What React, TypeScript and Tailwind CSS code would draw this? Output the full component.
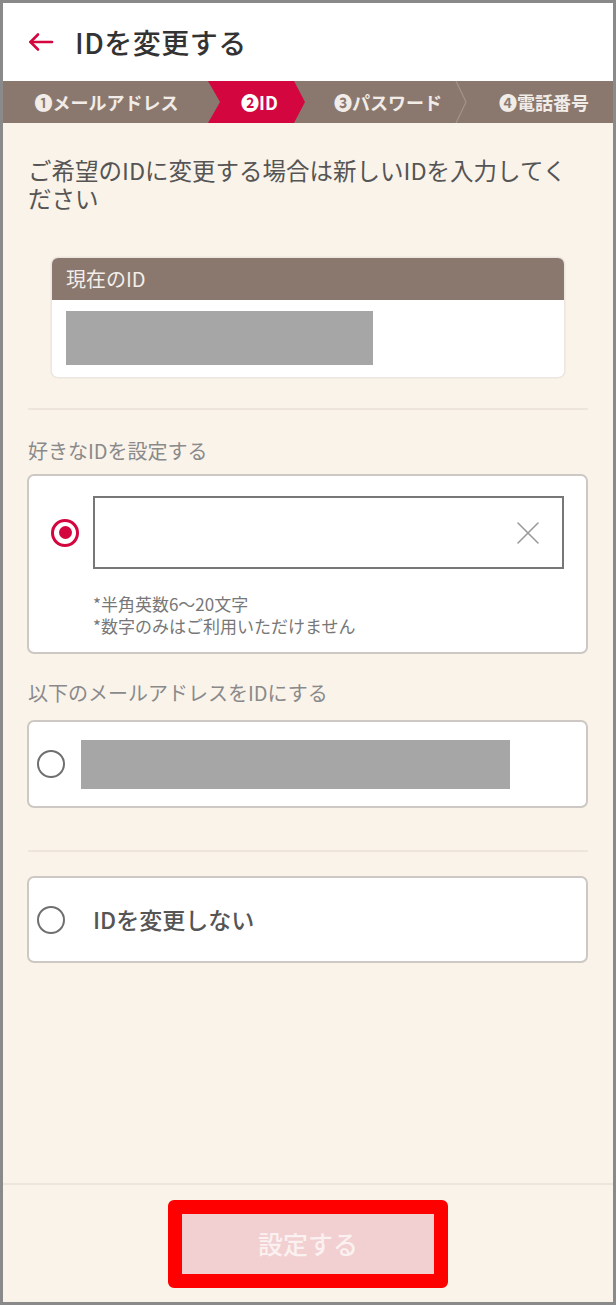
const font = { fontFamily: '"Noto Sans CJK JP", "Noto Sans", sans-serif' };

const steps = [
  { label: "❶メールアドレス", w: "w-[205px]" },
  { label: "❷ID", w: "w-[97px]", active: true },
  { label: "❸パスワード", w: "w-[160px]" },
  { label: "❹電話番号", w: "flex-1" },
];

function Radio({ checked }: { checked?: boolean }) {
  if (checked) {
    return (
      <span className="flex h-[28px] w-[28px] shrink-0 items-center justify-center rounded-full border-[3px] border-[#d3063f] bg-white">
        <span className="h-[13px] w-[13px] rounded-full bg-[#d3063f]" />
      </span>
    );
  }
  return <span className="h-[28px] w-[28px] shrink-0 rounded-full border-[2.5px] border-[#6f6f6f] bg-white" />;
}

export default function App() {
  return (
    <div style={font} className="flex h-[1305px] w-[616px] flex-col border-[3px] border-[#8a8a8a] bg-[#faf3ea]">
      <header className="flex h-[78px] shrink-0 items-center bg-white pl-[25px]">
        <svg width="26" height="20" viewBox="0 0 26 20" fill="none" stroke="#d3063f" strokeWidth="2.6" strokeLinecap="round" strokeLinejoin="round">
          <path d="M2.5 10H24" />
          <path d="M10 2.5 2.5 10 10 17.5" />
        </svg>
        <h1 className="ml-[21px] text-[28px] font-medium tracking-[0.5px] text-[#333]">IDを変更する</h1>
      </header>

      <nav className="flex h-[42px] shrink-0 items-stretch bg-[#8a786e] text-[18px] font-bold text-[#f1ece8]">
        {steps.map((s, i) =>
          s.active ? (
            <div
              key={s.label}
              className={`${s.w} flex items-center justify-center bg-[#d3063f] pl-[6px] text-white [clip-path:polygon(0_0,86px_0,97px_50%,86px_100%,0_100%,12px_50%)]`}
            >
              {s.label}
            </div>
          ) : (
            <div key={s.label} className={`${s.w} relative flex items-center justify-center`}>
              <span className={i === 0 ? "pl-[2px]" : i === 3 ? "pl-[10px]" : "pl-[6px]"}>{s.label}</span>
              {i === 2 && (
                <svg className="absolute right-[-2px] top-0" width="12" height="42" viewBox="0 0 12 42" fill="none" stroke="#a39389" strokeWidth="1.2">
                  <path d="M1 0 11 21 1 42" />
                </svg>
              )}
            </div>
          )
        )}
      </nav>

      <main className="flex-1 px-[25px] pt-[33px]">
        <p className="text-[23.5px] leading-[28px] text-[#555]">
          ご希望のIDに変更する場合は新しいIDを入力してく
          <br />
          ださい
        </p>

        <section className="ml-[24px] mr-[24px] mt-[46px] overflow-hidden rounded-[6px] bg-white shadow-[0_0_0_1.5px_#ece6df]">
          <div className="flex h-[42px] items-center bg-[#8a786e] px-[14px] text-[20px] text-[#f3eeea]">現在のID</div>
          <div className="h-[77px] pl-[14px] pt-[11px]">
            <div className="h-[54px] w-[307px] bg-[#a6a6a6]" />
          </div>
        </section>

        <div className="mt-[31px] h-[2px] bg-[#ede5dc]" />

        <p className="mt-[29px] text-[20px] leading-[24px] text-[#8a8a8a]">好きなIDを設定する</p>
        <div className="-ml-[1px] mt-[11px] h-[180px] rounded-[7px] border-2 border-[#cdc8c3] bg-white pl-[22px] pr-[22px] pt-[20px]">
          <div className="flex items-center">
            <Radio checked />
            <div className="ml-[14px] flex h-[73px] flex-1 items-center justify-end border-2 border-[#777] pr-[22px]">
              <svg width="24" height="24" viewBox="0 0 24 24" fill="none" stroke="#9a9a9a" strokeWidth="1.6" strokeLinecap="round">
                <path d="M2 2 22 22M22 2 2 22" />
              </svg>
            </div>
          </div>
          <div className="ml-[42px] mt-[24px] text-[17px] leading-[22px] text-[#777]">
            <p>*半角英数6〜20文字</p>
            <p>*数字のみはご利用いただけません</p>
          </div>
        </div>

        <p className="mt-[27px] text-[20px] leading-[24px] text-[#8a8a8a]">以下のメールアドレスをIDにする</p>
        <div className="-ml-[1px] mt-[15px] flex h-[88px] items-center rounded-[7px] border-2 border-[#cdc8c3] bg-white pl-[8px]">
          <Radio />
          <div className="ml-[16px] h-[49px] w-[429px] bg-[#a6a6a6]" />
        </div>

        <div className="mt-[42px] h-[2px] bg-[#ede5dc]" />

        <div className="-ml-[1px] mt-[24px] flex h-[87px] items-center rounded-[7px] border-2 border-[#cdc8c3] bg-white pl-[8px]">
          <Radio />
          <span className="ml-[28px] text-[23px] font-medium text-[#555]">IDを変更しない</span>
        </div>
      </main>

      <footer className="flex h-[119px] shrink-0 flex-col items-center border-t-2 border-[#eee6dd]">
        <div className="mt-[15px] rounded-[6px] border-[14px] border-[#ff0000]">
          <button className="flex h-[60px] w-[252px] items-center justify-center bg-[#f2cfd0] text-[25px] font-medium text-[#fbf1f1]">
            設定する
          </button>
        </div>
      </footer>
    </div>
  );
}
